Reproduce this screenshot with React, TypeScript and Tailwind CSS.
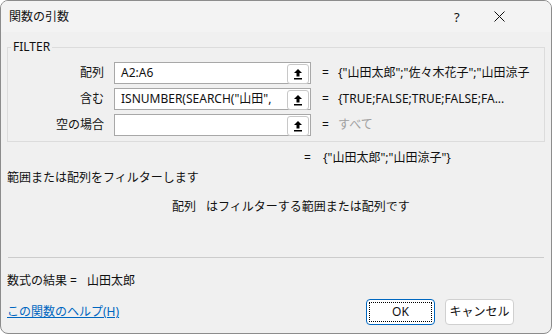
import React from "react";

function UpBtn() {
  return (
    <div className="absolute right-[1px] top-[1px] w-[22px] h-[20px] rounded-[3px] border border-[#c8c8c8] bg-white flex items-center justify-center">
      <svg width="10" height="12" viewBox="0 0 10 12">
        <path d="M5 1 L1 5 H3.5 V8.5 H6.5 V5 H9 Z" fill="#000" />
        <rect x="1" y="10" width="8" height="1.5" fill="#000" />
      </svg>
    </div>
  );
}

function Row({ label, value, result, gray }: { label: string; value: string; result: string; gray?: boolean }) {
  return (
    <div className="flex items-center h-[22px]">
      <div className="w-[95px] text-right">{label}</div>
      <div className="ml-[10px] relative w-[197px] h-[22px] border border-[#a8a8a8] bg-white">
        <div className="absolute left-[6px] top-0 h-[20px] leading-[20px] whitespace-nowrap">{value}</div>
        <UpBtn />
      </div>
      <div className="ml-[11px] w-[10px]">=</div>
      <div className={"ml-[6px] whitespace-nowrap " + (gray ? "text-[#a0a0a0]" : "")}>{result}</div>
    </div>
  );
}

export default function App() {
  return (
    <div
      className="w-[552px] h-[334px] bg-white text-[12px] text-[#111]"
      style={{ fontFamily: '"Segoe UI", "Noto Sans", "Noto Sans CJK JP", sans-serif' }}
    >
      <div className="w-[552px] h-[334px] rounded-[8px] border border-[#8c8c8c] overflow-hidden flex flex-col bg-[#f0f0f0]">
        <div className="h-[31px] shrink-0 bg-[#f3f3f3] flex items-center pl-[8px] relative">
          <span className="text-[12px]">関数の引数</span>
          <span className="absolute left-[453px] top-[7px] text-[13px]">?</span>
          <svg className="absolute left-[493px] top-[10px]" width="11" height="11" viewBox="0 0 11 11">
            <path d="M0.5 0.5 L10.5 10.5 M10.5 0.5 L0.5 10.5" stroke="#111" strokeWidth="1" />
          </svg>
        </div>
        <div className="flex-1 px-[6px] pt-[8px] flex flex-col">
          <fieldset className="border border-[#dcdcdc] h-[102px] pl-[1px] pb-[6px] pt-[6px] shrink-0">
            <legend className="ml-[2px] px-[2px] leading-[14px]">FILTER</legend>
            <div className="flex flex-col gap-[4px] mt-[2px]">
              <Row label="配列" value="A2:A6" result={'{"山田太郎";"佐々木花子";"山田涼子'} />
              <Row label="含む" value={' ISNUMBER(SEARCH("山田",'} result="{TRUE;FALSE;TRUE;FALSE;FA..." />
              <Row label="空の場合" value="" result="すべて" gray />
            </div>
          </fieldset>
          <div className="mt-[7px] h-[18px] flex items-center pl-[297px] shrink-0">
            <span className="w-[10px]">=</span>
            <span className="ml-[9px]">{'{"山田太郎";"山田涼子"}'}</span>
          </div>
          <div className="mt-[2px] h-[18px] leading-[18px] shrink-0">範囲または配列をフィルターします</div>
          <div className="mt-[11px] h-[18px] leading-[18px] pl-[165px] shrink-0">
            配列<span className="ml-[10px]">はフィルターする範囲または配列です</span>
          </div>
          <div className="mt-[41px] h-[1px] bg-[#cccccc] mx-[1px] shrink-0" />
          <div className="mt-[14px] h-[18px] leading-[18px] shrink-0">
            数式の結果 =<span className="ml-[10px]">山田太郎</span>
          </div>
          <div className="mt-[9px] flex items-center shrink-0">
            <a className="text-[#0067c0] underline">この関数のヘルプ(H)</a>
            <div className="ml-auto flex gap-[10px] mr-[31px]">
              <button className="w-[69px] h-[26px] rounded-[4px] border border-[#0067c0] bg-white p-[2px]">
                <div className="w-full h-full border border-dotted border-black flex items-center justify-center">OK</div>
              </button>
              <button className="w-[69px] h-[26px] rounded-[4px] border border-[#d0d0d0] bg-white flex items-center justify-center">キャンセル</button>
            </div>
          </div>
        </div>
      </div>
    </div>
  );
}
